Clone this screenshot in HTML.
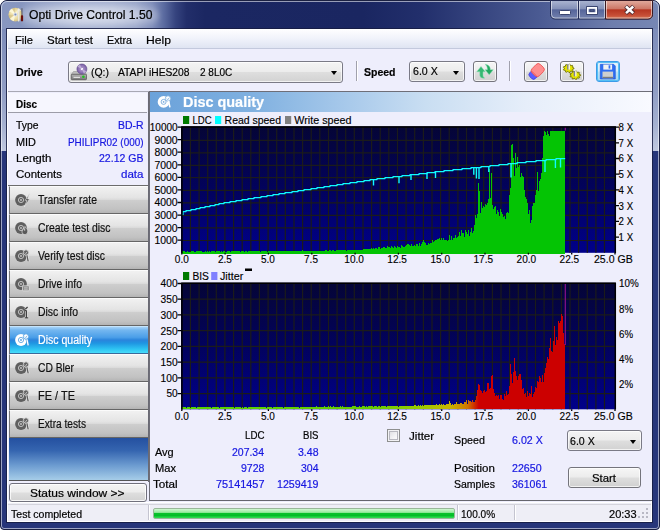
<!DOCTYPE html>
<html lang="en">
<head>
<meta charset="utf-8">
<title>Opti Drive Control 1.50</title>
<style>
html,body{margin:0;padding:0}
body{width:660px;height:530px;background:#fff;overflow:hidden;position:relative;font-family:"Liberation Sans",Arial,sans-serif;font-size:12px;color:#000}
div,span,svg{position:absolute;box-sizing:border-box}
.t{white-space:nowrap;transform-origin:0 50%;display:block;-webkit-text-stroke:.2px currentColor}
#frame{left:0;top:0;width:660px;height:530px;border-radius:7px 7px 4px 4px;background:#27367a;overflow:hidden;border:1px solid #1b2142}
#sideg{left:0;top:0;width:658px;height:150px;background:linear-gradient(to bottom,#7080b0 0,#7e8dba 20%,#909dc4 60%,#a4b0d0 82%,#c0c8df 100%)}
#titleg{left:0;top:0;width:658px;height:28px;background:linear-gradient(to right,#8897c0 0,#8796bf 3%,#97a4c9 6%,#a9b4d3 12%,#a7b2d2 17%,#9aa6ca 20.5%,#7f8dba 23%,#5a6a9f 24.800%,#36447f 26.500%,#222e6a 28.200%,#1b2762 31%,#1a2661 55%,#222f6c 64%,#4b5b93 82%,#6e7ead 93%,#7787b4 100%)}
#titleglow{left:20px;top:4px;width:138px;height:21px;border-radius:10px;background:radial-gradient(ellipse at center,rgba(255,255,255,.55) 0,rgba(255,255,255,.4) 50%,rgba(255,255,255,0) 100%);filter:blur(2.5px)}
#hl{left:0;top:0;width:658px;height:528px;border-radius:6px 6px 3px 3px;border:1px solid rgba(255,255,255,.55)}
#client{left:7px;top:29px;width:645px;height:493px;background:#eeeefc;border:1px solid #fff;outline:1px solid rgba(22,28,66,.85)}
#menubar{left:8px;top:30px;width:643px;height:19px;background:linear-gradient(to bottom,#fdfdff 0,#f1f3fb 45%,#dfe4f2 100%);border-bottom:1px solid #c3c9dd}
#tbline{left:8px;top:91px;width:643px;height:2px;border-top:1px solid #a8a8b4;border-bottom:1px solid #fff}
.combo{border:1px solid #7a7a86;border-radius:3px;background:linear-gradient(to bottom,#f4f4f4 0,#ececec 48%,#dedede 52%,#d2d2d2 100%);box-shadow:inset 0 0 0 1px rgba(255,255,255,.7)}
.arrow{width:0;height:0;border-left:3.5px solid transparent;border-right:3.5px solid transparent;border-top:4px solid #000}
.vsep{width:2px;border-left:1px solid #a0a0ac;border-right:1px solid #fff}
.tbtn{border:1px solid #74747c;border-radius:3px;background:linear-gradient(to bottom,#f6f6f6 0,#ececec 48%,#dedede 52%,#d0d0d0 100%);box-shadow:inset 0 0 0 1px rgba(255,255,255,.7)}
/* sidebar */
#side{left:8px;top:92px;width:141px;height:390px;background:#eeeefc;border-right:1px solid #6a6a74}
#dischdr{left:8px;top:93px;width:139px;height:20px;background:#f6f6fe;border-bottom:1px solid #9c9ca8}
#sidehl{left:147px;top:92px;width:1px;height:390px;background:#fff}
.sb{left:9px;width:139px;height:28px;border-top:1px solid #fbfbfb;border-bottom:1px solid #666;border-left:1px solid #777;background:linear-gradient(to bottom,#f1f1f1 0,#e4e4e4 40%,#d9d9d9 50%,#cdcdcd 52%,#c2c2c2 85%,#b4b4b4 100%)}
.sb.sel{background:linear-gradient(to bottom,#a5d2f8 0,#74b7f0 12%,#4a9ee8 40%,#2b84dc 50%,#1f95e2 62%,#2ec4f2 85%,#48dcfa 100%);border-top-color:#c4e4fc;border-bottom-color:#3a6a9a}
.sb .ic{left:4px;top:5px}
#sblue{left:9px;top:438px;width:139px;height:43px;background:linear-gradient(to bottom,#2450a0 0,#3565b0 30%,#6c9bd0 65%,#a6cde8 100%);border-bottom:1px solid #555}
#statbtn{left:9px;top:483px;width:138px;height:19px;border:1px solid #70707c;border-radius:3px;background:linear-gradient(to bottom,#f4f4f4 0,#ececec 48%,#dedede 52%,#d2d2d2 100%);box-shadow:inset 0 0 0 1px rgba(255,255,255,.8)}
/* main panel */
#main{left:149px;top:91px;width:503px;height:410px;border-left:1px solid #6e6e78;border-top:1px solid #6e6e78;border-bottom:1px solid #66666e;background:#eeeefc}
#mainhl{left:150px;top:92px;width:501px;height:1px;background:#fff}
#hdr{left:150px;top:92px;width:501px;height:20px;background:linear-gradient(to right,#6ba2da 0,#7fb0e0 20%,#a9caeb 40%,#c9def2 55%,#e6eefa 75%,#f9faff 100%)}
#charts{left:149px;top:113px}
#chk{left:387px;top:429px;width:13px;height:13px;border:1px solid #8e8f8f;background:linear-gradient(135deg,#d8d8dc 0,#f4f4f6 60%,#fff 100%);box-shadow:inset 0 0 0 1px #f2f2f4, inset 0 0 0 2px #b8b8c0}
/* status bar */
#status{left:8px;top:502px;width:643px;height:19px;background:#eeeef6;border-top:1px solid #fff}
#status:before{content:"";position:absolute;left:0;top:1px;width:643px;height:1px;background:#d4d4dc}
#status .sep{top:2px;width:2px;height:15px;border-left:1px solid #c4c4d0;border-right:1px solid #fff}
#prog{left:153px;top:508px;width:302px;height:11px;border-radius:2px;background:linear-gradient(to bottom,#d2f8d2 0,#96ea9e 38%,#08c22c 50%,#04bc28 72%,#30e054 100%);border:1px solid #9ab89a}
#grip{left:638px;top:508px;width:12px;height:12px}
</style>
</head>
<body>
<div id="frame">
  <div id="sideg"></div>
  <div id="titleg"></div>
  <div id="titleglow"></div>
  <div id="hl"></div>
</div>
<svg style="left:7px;top:6px" width="18" height="18" viewBox="7 6 18 18">
<defs><radialGradient id="cdg" cx="0.45" cy="0.45" r="0.6"><stop offset="0" stop-color="#fff8d4"/><stop offset="0.6" stop-color="#ecdca2"/><stop offset="1" stop-color="#cdb878"/></radialGradient></defs>
<circle cx="15.4" cy="14.6" r="6.9" fill="url(#cdg)"/>
<path d="M15.4,14.6L9,11.5A6.9,6.9 0 0 1 12,8.6Z M15.4,14.6L13.8,21.3A6.9,6.9 0 0 1 10,18.8Z M15.4,14.6L18,8.2A6.9,6.9 0 0 1 21,10.6Z" fill="#fffbe2" opacity=".8"/>
<path d="M15.4,14.6L8.5,14.8A6.9,6.9 0 0 0 9.6,18.3Z M15.4,14.6L15.2,7.7A6.9,6.9 0 0 0 12.2,8.5Z" fill="#c9b57a" opacity=".55"/>
<circle cx="15.4" cy="14.6" r="2" fill="#dfe3ee"/><circle cx="15.4" cy="14.6" r="1" fill="#7d8db4"/>
<path d="M17.6,9.2c.8-.6 1.700-.600 2.300,0l-.5,2.300v9.300c0,.8-1.400,.8-1.400,0v-9.300z" fill="#f4f2ec" stroke="#cfcabb" stroke-width=".4"/>
<rect x="21.4" y="8.2" width="1.100" height="7.4" fill="#5e5e66"/>
<rect x="20.9" y="15.300" width="2.2" height="6" rx=".6" fill="#6a0f0c"/>
</svg>
<svg style="left:549px;top:0" width="105" height="22" viewBox="549 0 105 22">
<defs>
<linearGradient id="cb1" x1="0" y1="0" x2="0" y2="1"><stop offset="0" stop-color="#abb5d1"/><stop offset=".46" stop-color="#8390b7"/><stop offset=".5" stop-color="#56659a"/><stop offset="1" stop-color="#7381ad"/></linearGradient>
<linearGradient id="cb2" x1="0" y1="0" x2="0" y2="1"><stop offset="0" stop-color="#e2ab9e"/><stop offset=".46" stop-color="#cc7665"/><stop offset=".5" stop-color="#b63521"/><stop offset=".8" stop-color="#c64e36"/><stop offset="1" stop-color="#d67a58"/></linearGradient>
</defs>
<path d="M550.5,0.500H652.5V14.500a4.500,4.500 0 0 1 -4.500,4.500H555a4.500,4.500 0 0 1 -4.500,-4.500Z" fill="url(#cb1)" stroke="#232c55" stroke-width="1"/>
<path d="M605.5,0.500H652.5V14.500a4.500,4.500 0 0 1 -4.500,4.500H605.500Z" fill="url(#cb2)" stroke="#3a1a22" stroke-width="1"/>
<path d="M551.5,1V14.500a3.500,3.500 0 0 0 3.500,3.500H577.5V1M579.5,1V18H604.500V1M606.500,1V18H648a3.500,3.500 0 0 0 3.500,-3.500V1" fill="none" stroke="rgba(255,255,255,.55)" stroke-width="1"/>
<path d="M578.5,0.500V19" stroke="#232c55" stroke-width="1"/>
<rect x="559.5" y="10.500" width="11" height="4" rx=".8" fill="#fff" stroke="#3a4570" stroke-width="1"/>
<path d="M586.5,6.500h11v8h-11z" fill="none" stroke="#3a4570" stroke-width="1"/><path d="M590,9.800h4v1.600h-4z" fill="none" stroke="#3a4570" stroke-width="1"/>
<path d="M587.8,7.800h8.400v5.400h-8.400z" fill="none" stroke="#fff" stroke-width="1.700"/>
<path d="M625.600,6.200l8,7.200M633.600,6.200l-8,7.200" fill="none" stroke="#4c2a30" stroke-width="4.200"/>
<path d="M626,6.500l7.200,6.600M633.200,6.500l-7.200,6.600" fill="none" stroke="#fff" stroke-width="2.500"/>
</svg>
<div id="client"></div>
<div id="menubar"></div>
<div id="tbline"></div>
<!-- toolbar -->
<div class="combo" style="left:68px;top:61px;width:275px;height:22px"></div>
<div class="arrow" style="left:331px;top:71px"></div>
<svg style="left:70px;top:63px" width="18" height="18" viewBox="70 63 18 18">
<defs><radialGradient id="pdg" cx=".5" cy=".5" r=".5"><stop offset="0" stop-color="#fff"/><stop offset=".22" stop-color="#f4eefa"/><stop offset=".3" stop-color="#a58fc4"/><stop offset="1" stop-color="#7a5da6"/></radialGradient>
<linearGradient id="dbx" x1="0" y1="0" x2="0" y2="1"><stop offset="0" stop-color="#b4b4b4"/><stop offset="1" stop-color="#787878"/></linearGradient></defs>
<path d="M73.500,71.500h11l2,2.900h-15.200z" fill="#bdbdbd" stroke="#8a8a8a" stroke-width=".5"/>
<rect x="71.300" y="74.300" width="15.200" height="5.400" rx=".8" fill="url(#dbx)" stroke="#505050" stroke-width=".7"/>
<rect x="73.500" y="76.800" width="6.500" height="1.100" fill="#e6e6e6"/>
<circle cx="83.400" cy="76.800" r="1.300" fill="#20c020"/>
<circle cx="81.900" cy="69" r="5" fill="url(#pdg)" stroke="#5e4a88" stroke-width=".6"/>
<path d="M81.900,69L77.500,66.700A5,5 0 0 1 80,64.400Z M81.900,69L86.300,71.300A5,5 0 0 1 83.800,73.600Z" fill="#cdbfe2" opacity=".75"/>
</svg>
<div class="vsep" style="left:356px;top:61px;height:20px"></div>
<div class="combo" style="left:409px;top:61px;width:56px;height:21px"></div>
<div class="arrow" style="left:453px;top:70.500px"></div>
<div class="tbtn" style="left:473px;top:61px;width:24px;height:21px"></div>
<div class="vsep" style="left:509px;top:61px;height:20px"></div>
<div class="tbtn" style="left:524px;top:61px;width:24px;height:21px"></div>
<div class="tbtn" style="left:560px;top:61px;width:24px;height:21px"></div>
<div class="tbtn" style="left:596px;top:61px;width:24px;height:21px;border-color:#3c9be8;background:linear-gradient(to bottom,#e8f5fd 0,#d6edfb 48%,#bde3f8 52%,#a8d8f4 100%);box-shadow:inset 0 0 0 1px #56c0f4"></div>
<svg style="left:474px;top:62px" width="22" height="19" viewBox="474 62 22 19">
<path d="M481,66.400L485.300,71.800H483v3.600c0,1.200 .8,2.200 2,2.600c-2.800,.6-5.200-.4-5.200-2.800v-3.400H476.700Z" fill="#35b872" stroke="#8fe0b6" stroke-width=".5"/>
<path d="M489.200,74.800L485,69.700H487.400c0-2.400-.6-4-2.400-5.400c3,.2 5.400,2 5.400,5.400H493.300Z" fill="#22a860" stroke="#8fe0b6" stroke-width=".5"/>
</svg>
<svg style="left:525px;top:62px" width="22" height="19" viewBox="525 62 22 19">
<g transform="rotate(-46 536.300 71.800)">
<rect x="528.300" y="67.800" width="8" height="8" rx="2.600" fill="#5c5cff" stroke="#3c3ce4" stroke-width=".8"/>
<rect x="532.600" y="66.600" width="11.800" height="10.200" rx="3" fill="#ff8e8e" stroke="#ec4c4c" stroke-width=".8"/>
<path d="M533.600,68.500v6.400" stroke="#ec4c4c" stroke-width=".6" fill="none"/>
</g></svg>
<svg style="left:561px;top:62px" width="22" height="19" viewBox="561 62 22 19"><path d="M573.97,67.98L573.97,68.82L572.68,69.21L572.39,69.83L573.06,70.77L572.37,71.42L571.06,71.07L570.33,71.39L570.06,72.45L569.00,72.60L568.29,71.68L567.46,71.56L566.38,72.24L565.45,71.82L565.66,70.75L565.12,70.25L563.74,70.23L563.37,69.44L564.41,68.73L564.41,68.07L563.37,67.36L563.74,66.57L565.12,66.55L565.66,66.05L565.45,64.98L566.38,64.56L567.46,65.24L568.29,65.12L569.00,64.20L570.06,64.35L570.33,65.41L571.06,65.73L572.37,65.38L573.06,66.03L572.39,66.97L572.68,67.59Z" fill="#e4e400" stroke="#6e6e00" stroke-width=".9" stroke-linejoin="round"/><rect x="567.1" y="64.2" width="1.500" height="5.400" fill="#80809a"/><rect x="568.6" y="64.2" width="1.300" height="5.400" fill="#f4f4f4"/><path d="M580.57,74.78L580.57,75.62L579.28,76.01L578.99,76.63L579.66,77.57L578.97,78.22L577.66,77.87L576.93,78.19L576.66,79.25L575.60,79.40L574.89,78.48L574.06,78.36L572.98,79.04L572.05,78.62L572.26,77.55L571.72,77.05L570.34,77.03L569.97,76.24L571.01,75.53L571.01,74.87L569.97,74.16L570.34,73.37L571.72,73.35L572.26,72.85L572.05,71.78L572.98,71.36L574.06,72.04L574.89,71.92L575.60,71.00L576.66,71.15L576.93,72.21L577.66,72.53L578.97,72.18L579.66,72.83L578.99,73.77L579.28,74.39Z" fill="#e4e400" stroke="#6e6e00" stroke-width=".9" stroke-linejoin="round"/><rect x="573.7" y="71.0" width="1.500" height="5.400" fill="#80809a"/><rect x="575.2" y="71.0" width="1.300" height="5.400" fill="#f4f4f4"/></svg>
<svg style="left:597px;top:62px" width="22" height="19" viewBox="597 62 22 19">
<path d="M600.300,64.300H613.600L615.300,66V79H600.300Z" fill="#2f6ef2" stroke="#1c50d0" stroke-width=".6"/>
<rect x="603.300" y="64.600" width="8.800" height="5" fill="#f2f2f2"/>
<rect x="608.600" y="65.300" width="1.700" height="3.300" fill="#2f6ef2"/>
<rect x="602.500" y="71.600" width="10.600" height="6.600" fill="#cfcfcf"/>
<rect x="602.500" y="76.800" width="10.600" height="1.400" fill="#7c7c7c"/>
</svg>
<!-- sidebar -->
<div id="side"></div>
<div id="dischdr"></div>
<div style="left:8px;top:185px;width:140px;height:1px;background:#6c6c6c"></div>
<div class="sb" style="top:186px"><svg class="ic" width="19" height="16" viewBox="0 0 19 16"><circle cx="7" cy="8" r="5.900" fill="#5f5f5f"/><circle cx="7" cy="8" r="2.600" fill="none" stroke="#d8d8d8" stroke-width=".8"/><circle cx="7" cy="8" r="1" fill="#cfcfcf"/><circle cx="7" cy="8" r=".45" fill="#5f5f5f"/><path d="M15.600,1.400L11.300,8.300h1.900L10.300,15l5.200-7.900h-2z" fill="#2c2c2c" stroke="#e6e6e6" stroke-width=".7"/></svg></div>
<div class="sb" style="top:214px"><svg class="ic" width="19" height="16" viewBox="0 0 19 16"><circle cx="7" cy="8" r="5.900" fill="#5f5f5f"/><circle cx="7" cy="8" r="2.600" fill="none" stroke="#d8d8d8" stroke-width=".8"/><circle cx="7" cy="8" r="1" fill="#cfcfcf"/><circle cx="7" cy="8" r=".45" fill="#5f5f5f"/><path d="M10.800,6.500c1.800,1.500 3.300,3 3,5.400c-.3,1.900-1.900,2.800-3.400,2.600c-1.900-.3-2.700-1.900-2.300-3.400c.4-1.100 1.100-1.400 1.200-2.800c.9,.9 1.100,1.400 1.400,2.200z" fill="#5a5a5a" stroke="#e2e2e2" stroke-width=".7"/></svg></div>
<div class="sb" style="top:242px"><svg class="ic" width="19" height="16" viewBox="0 0 19 16"><circle cx="7" cy="8" r="5.900" fill="#5f5f5f"/><circle cx="7" cy="8" r="2.600" fill="none" stroke="#d8d8d8" stroke-width=".8"/><circle cx="7" cy="8" r="1" fill="#cfcfcf"/><circle cx="7" cy="8" r=".45" fill="#5f5f5f"/><path d="M12.800,6.800l1.500,6.800" stroke="#e6e6e6" stroke-width="2.600"/><path d="M12.800,6.800l1.400,6.600" stroke="#5f5f5f" stroke-width="1.300"/><circle cx="12" cy="4.500" r="2.700" fill="#5f5f5f" stroke="#e6e6e6" stroke-width=".8"/><path d="M10.800,4.600l1,1l1.400,-1.900" stroke="#e6e6e6" stroke-width=".7" fill="none"/></svg></div>
<div class="sb" style="top:270px"><svg class="ic" width="19" height="16" viewBox="0 0 19 16"><circle cx="7" cy="8" r="5.900" fill="#5f5f5f"/><circle cx="7" cy="8" r="2.600" fill="none" stroke="#d8d8d8" stroke-width=".8"/><circle cx="7" cy="8" r="1" fill="#cfcfcf"/><circle cx="7" cy="8" r=".45" fill="#5f5f5f"/><rect x="8.500" y="9.800" width="6.800" height="5" rx=".8" fill="#8c8c8c" stroke="#e8e8e8" stroke-width=".7"/><path d="M10,11.800h3.800M10,13.200h3.800" stroke="#e0e0e0" stroke-width=".6"/></svg></div>
<div class="sb" style="top:298px"><svg class="ic" width="19" height="16" viewBox="0 0 19 16"><circle cx="7" cy="8" r="5.900" fill="#5f5f5f"/><circle cx="7" cy="8" r="2.600" fill="none" stroke="#d8d8d8" stroke-width=".8"/><circle cx="7" cy="8" r="1" fill="#cfcfcf"/><circle cx="7" cy="8" r=".45" fill="#5f5f5f"/><path d="M13.600,3l-2.400,2.300M12.400,6.500v7.200M10.800,13.900h3.400M11,6.700h1.400" stroke="#e8e8e8" stroke-width="2.400" fill="none"/><path d="M13.600,3l-2.400,2.300M12.400,6.500v7.200M10.800,13.900h3.400M11,6.700h1.400" stroke="#444" stroke-width="1.300" fill="none"/></svg></div>
<div class="sb sel" style="top:326px"><svg class="ic" width="19" height="16" viewBox="0 0 19 16"><circle cx="7" cy="8" r="5.900" fill="#ffffff"/><circle cx="7" cy="8" r="2.600" fill="none" stroke="#4a9be0" stroke-width=".8"/><circle cx="7" cy="8" r="1" fill="#4a9be0"/><circle cx="7" cy="8" r=".45" fill="#ffffff"/><path d="M12.800,6.800l1.500,6.800" stroke="#4a9be0" stroke-width="2.600"/><path d="M12.800,6.800l1.400,6.600" stroke="#ffffff" stroke-width="1.300"/><circle cx="12" cy="4.500" r="2.700" fill="#ffffff" stroke="#4a9be0" stroke-width=".8"/><path d="M10.800,4.600l1,1l1.400,-1.900" stroke="#4a9be0" stroke-width=".7" fill="none"/></svg></div>
<div class="sb" style="top:354px"><svg class="ic" width="19" height="16" viewBox="0 0 19 16"><circle cx="7" cy="8" r="5.900" fill="#5f5f5f"/><circle cx="7" cy="8" r="2.600" fill="none" stroke="#d8d8d8" stroke-width=".8"/><circle cx="7" cy="8" r="1" fill="#cfcfcf"/><circle cx="7" cy="8" r=".45" fill="#5f5f5f"/><path d="M12.800,6.800l1.500,6.800" stroke="#e6e6e6" stroke-width="2.600"/><path d="M12.800,6.800l1.400,6.600" stroke="#5f5f5f" stroke-width="1.300"/><circle cx="12" cy="4.500" r="2.700" fill="#5f5f5f" stroke="#e6e6e6" stroke-width=".8"/><path d="M10.800,4.600l1,1l1.400,-1.900" stroke="#e6e6e6" stroke-width=".7" fill="none"/></svg></div>
<div class="sb" style="top:382px"><svg class="ic" width="19" height="16" viewBox="0 0 19 16"><circle cx="7" cy="8" r="5.900" fill="#5f5f5f"/><circle cx="7" cy="8" r="2.600" fill="none" stroke="#d8d8d8" stroke-width=".8"/><circle cx="7" cy="8" r="1" fill="#cfcfcf"/><circle cx="7" cy="8" r=".45" fill="#5f5f5f"/><path d="M12.800,6.800l1.500,6.800" stroke="#e6e6e6" stroke-width="2.600"/><path d="M12.800,6.800l1.400,6.600" stroke="#5f5f5f" stroke-width="1.300"/><circle cx="12" cy="4.500" r="2.700" fill="#5f5f5f" stroke="#e6e6e6" stroke-width=".8"/><path d="M10.800,4.600l1,1l1.400,-1.900" stroke="#e6e6e6" stroke-width=".7" fill="none"/></svg></div>
<div class="sb" style="top:410px"><svg class="ic" width="19" height="16" viewBox="0 0 19 16"><circle cx="7" cy="8" r="5.900" fill="#5f5f5f"/><circle cx="7" cy="8" r="2.600" fill="none" stroke="#d8d8d8" stroke-width=".8"/><circle cx="7" cy="8" r="1" fill="#cfcfcf"/><circle cx="7" cy="8" r=".45" fill="#5f5f5f"/><path d="M12.800,6.800l1.500,6.800" stroke="#e6e6e6" stroke-width="2.600"/><path d="M12.800,6.800l1.400,6.600" stroke="#5f5f5f" stroke-width="1.300"/><circle cx="12" cy="4.500" r="2.700" fill="#5f5f5f" stroke="#e6e6e6" stroke-width=".8"/><path d="M10.800,4.600l1,1l1.400,-1.900" stroke="#e6e6e6" stroke-width=".7" fill="none"/></svg></div>
<div id="sblue"></div>
<div id="statbtn"></div>
<!-- main -->
<div id="main"></div>
<div id="hdr"></div>
<svg style="left:156px;top:94px" width="18" height="17" viewBox="156 94 18 17">
<circle cx="163.600" cy="101.900" r="5.900" fill="#fff"/>
<circle cx="163.600" cy="101.900" r="2.500" fill="none" stroke="#79acdd" stroke-width=".9"/>
<circle cx="163.600" cy="101.900" r=".9" fill="#79acdd"/>
<circle cx="168" cy="98.500" r="2.700" fill="#fff" stroke="#79acdd" stroke-width=".8"/>
<path d="M166.800,98.600l1,1.100l1.500,-2" stroke="#79acdd" stroke-width=".8" fill="none"/>
<path d="M168.600,101l1.300,6.300" stroke="#fff" stroke-width="1.600"/>
</svg>
<svg id="charts" width="503" height="310" viewBox="149 113 503 310">
<defs><linearGradient id="pg" x1="0" y1="0" x2="0" y2="1"><stop offset="0" stop-color="#050536"/><stop offset="0.5" stop-color="#02025d"/><stop offset="1" stop-color="#00008a"/></linearGradient>
<linearGradient id="bg" gradientUnits="userSpaceOnUse" x1="182" y1="0" x2="565" y2="0"><stop offset="0" stop-color="#55d200"/><stop offset="0.5" stop-color="#66cc00"/><stop offset="0.62" stop-color="#98cc00"/><stop offset="0.70" stop-color="#c8b400"/><stop offset="0.745" stop-color="#d07800"/><stop offset="0.775" stop-color="#cc0000"/><stop offset="1" stop-color="#cc0000"/></linearGradient></defs>
<rect x="181.0" y="126.3" width="434.6" height="126.5" fill="url(#pg)"/>
<rect x="181.0" y="282.7" width="434.6" height="126.6" fill="url(#pg)"/>
<path d="M190.4,127.1V252.8M190.4,283.5V409.3M199.1,127.1V252.8M199.1,283.5V409.3M207.7,127.1V252.8M207.7,283.5V409.3M216.3,127.1V252.8M216.3,283.5V409.3M224.9,127.1V252.8M224.9,283.5V409.3M233.6,127.1V252.8M233.6,283.5V409.3M242.2,127.1V252.8M242.2,283.5V409.3M250.8,127.1V252.8M250.8,283.5V409.3M259.4,127.1V252.8M259.4,283.5V409.3M268.1,127.1V252.8M268.1,283.5V409.3M276.7,127.1V252.8M276.7,283.5V409.3M285.3,127.1V252.8M285.3,283.5V409.3M294.0,127.1V252.8M294.0,283.5V409.3M302.6,127.1V252.8M302.6,283.5V409.3M311.2,127.1V252.8M311.2,283.5V409.3M319.8,127.1V252.8M319.8,283.5V409.3M328.5,127.1V252.8M328.5,283.5V409.3M337.1,127.1V252.8M337.1,283.5V409.3M345.7,127.1V252.8M345.7,283.5V409.3M354.3,127.1V252.8M354.3,283.5V409.3M363.0,127.1V252.8M363.0,283.5V409.3M371.6,127.1V252.8M371.6,283.5V409.3M380.2,127.1V252.8M380.2,283.5V409.3M388.8,127.1V252.8M388.8,283.5V409.3M397.5,127.1V252.8M397.5,283.5V409.3M406.1,127.1V252.8M406.1,283.5V409.3M414.7,127.1V252.8M414.7,283.5V409.3M423.4,127.1V252.8M423.4,283.5V409.3M432.0,127.1V252.8M432.0,283.5V409.3M440.6,127.1V252.8M440.6,283.5V409.3M449.2,127.1V252.8M449.2,283.5V409.3M457.9,127.1V252.8M457.9,283.5V409.3M466.5,127.1V252.8M466.5,283.5V409.3M475.1,127.1V252.8M475.1,283.5V409.3M483.7,127.1V252.8M483.7,283.5V409.3M492.4,127.1V252.8M492.4,283.5V409.3M501.0,127.1V252.8M501.0,283.5V409.3M509.6,127.1V252.8M509.6,283.5V409.3M518.3,127.1V252.8M518.3,283.5V409.3M526.9,127.1V252.8M526.9,283.5V409.3M535.5,127.1V252.8M535.5,283.5V409.3M544.1,127.1V252.8M544.1,283.5V409.3M552.8,127.1V252.8M552.8,283.5V409.3M561.4,127.1V252.8M561.4,283.5V409.3M570.0,127.1V252.8M570.0,283.5V409.3M578.6,127.1V252.8M578.6,283.5V409.3M587.3,127.1V252.8M587.3,283.5V409.3M595.9,127.1V252.8M595.9,283.5V409.3M604.5,127.1V252.8M604.5,283.5V409.3M181.8,240.5H615.0M181.8,227.8H615.0M181.8,215.3H615.0M181.8,202.8H615.0M181.8,190.4H615.0M181.8,177.7H615.0M181.8,165.4H615.0M181.8,152.8H615.0M181.8,140.3H615.0M181.8,393.6H615.0M181.8,377.9H615.0M181.8,362.1H615.0M181.8,346.4H615.0M181.8,330.7H615.0M181.8,314.9H615.0M181.8,299.2H615.0" stroke="#1b1b1b" stroke-width="1.2" fill="none"/>
<path d="M182.0,253.5V251.1h1V251.4h1V251.3h1V251.9h1V251.9h1V251.3h1V251.9h1V251.7h1V251.5h1V251.3h1V251.4h1V250.9h1V251.6h1V251.8h1V251.0h1V251.0h1V250.9h1V251.4h1V251.0h1V250.8h1V251.5h1V251.6h1V251.6h1V251.1h1V251.6h1V251.0h1V251.6h1V251.1h1V251.5h1V251.4h1V251.2h1V251.4h1V251.3h1V251.6h1V250.9h1V251.0h1V250.8h1V251.3h1V251.5h1V250.9h1V251.5h1V251.1h1V251.4h1V251.7h1V251.6h1V251.1h1V250.8h1V251.0h1V251.6h1V251.0h1V251.2h1V250.7h1V250.9h1V251.0h1V251.3h1V250.8h1V250.8h1V251.3h1V251.6h1V250.8h1V250.9h1V250.8h1V251.6h1V251.4h1V251.0h1V251.6h1V251.4h1V250.9h1V251.3h1V251.2h1V250.7h1V251.3h1V250.7h1V250.6h1V251.1h1V251.2h1V251.3h1V251.1h1V251.5h1V251.2h1V251.1h1V251.3h1V251.1h1V250.7h1V251.3h1V251.5h1V251.3h1V250.8h1V250.8h1V250.6h1V250.8h1V250.9h1V250.9h1V250.6h1V251.3h1V250.9h1V250.6h1V250.9h1V250.6h1V251.4h1V250.7h1V251.4h1V251.1h1V251.3h1V250.6h1V251.0h1V250.9h1V250.8h1V250.9h1V250.6h1V250.6h1V250.9h1V250.9h1V250.9h1V250.9h1V251.3h1V250.5h1V250.9h1V250.6h1V251.1h1V250.4h1V251.3h1V250.7h1V250.7h1V251.2h1V251.1h1V250.9h1V251.1h1V250.6h1V250.7h1V250.5h1V250.9h1V251.0h1V251.1h1V250.9h1V250.8h1V250.8h1V250.5h1V251.0h1V250.6h1V251.1h1V250.6h1V250.9h1V250.1h1V250.1h1V250.7h1V250.6h1V250.2h1V250.3h1V250.8h1V250.2h1V250.4h1V250.5h1V250.7h1V250.2h1V250.0h1V250.2h1V250.2h1V250.4h1V250.2h1V249.9h1V250.1h1V250.3h1V250.0h1V250.6h1V250.3h1V250.2h1V249.6h1V249.5h1V249.8h1V249.6h1V250.2h1V249.8h1V249.8h1V249.8h1V249.6h1V249.8h1V250.0h1V249.6h1V249.9h1V249.8h1V249.3h1V249.2h1V249.2h1V249.0h1V249.1h1V249.3h1V248.9h1V248.9h1V248.2h1V248.9h1V248.3h1V248.7h1V248.4h1V248.1h1V249.0h1V247.2h1V247.1h1V248.6h1V247.7h1V247.6h1V247.4h1V247.4h1V247.7h1V248.0h1V246.3h1V246.6h1V246.7h1V247.5h1V246.4h1V246.7h1V247.5h1V246.3h1V247.1h1V247.9h1V245.8h1V246.7h1V247.1h1V247.7h1V244.7h1V245.6h1V246.8h1V246.5h1V246.4h1V245.2h1V244.4h1V244.3h1V244.5h1V246.1h1V243.8h1V246.1h1V245.6h1V245.4h1V246.0h1V243.7h1V243.5h1V245.8h1V243.1h1V246.2h1V244.1h1V242.3h1V239.9h1V242.2h1V242.7h1V245.3h1V244.9h1V242.6h1V244.3h1V242.9h1V243.2h1V240.3h1V242.2h1V240.8h1V239.6h1V239.7h1V239.3h1V239.1h1V238.1h1V240.2h1V238.2h1V240.1h1V237.8h1V239.7h1V240.4h1V239.6h1V240.8h1V240.1h1V235.3h1V239.9h1V235.9h1V239.6h1V238.3h1V237.6h1V234.6h1V237.5h1V237.3h1V235.9h1V231.5h1V235.8h1V230.0h1V232.8h1V233.1h1V236.6h1V229.7h1V231.9h1V233.9h1V230.1h1V235.9h1V232.2h1V228.3h1V233.2h1V230.9h1V224.6h1V215.1h1V218.1h1V214.2h1V183.2h1V190.8h1V212.9h1V201.9h1V207.8h1V205.9h1V206.6h1V204.0h1V205.3h1V203.3h1V199.3h1V168.5h1V197.5h1V172.8h1V204.8h1V208.6h1V207.2h1V206.0h1V214.0h1V210.4h1V212.1h1V216.2h1V209.4h1V211.5h1V214.0h1V216.8h1V216.0h1V219.4h1V213.3h1V211.6h1V212.7h1V194.6h1V187.5h1V145.2h1V143.9h1V158.0h1V176.3h1V152.7h1V168.4h1V156.7h1V166.6h1V164.9h1V176.5h1V172.5h1V175.5h1V176.6h1V189.8h1V196.7h1V198.9h1V202.8h1V213.7h1V209.9h1V223.3h1V220.1h1V205.8h1V202.7h1V203.4h1V195.2h1V189.5h1V172.2h1V191.4h1V181.2h1V178.7h1V172.8h1V158.4h1V135.7h1V130.6h1V132.1h1V135.2h1V130.6h1V133.8h1V135.5h1V130.6h1V130.6h1V130.6h1V130.6h1V130.6h1V130.6h1V130.6h1V130.6h1V130.6h1V130.6h1V130.6h1V130.6h1V130.6h1V130.6h1V130.6h1V253.5Z" fill="#04c404" shape-rendering="crispEdges"/>
<path d="M182.0,409.0V406.6h1V407.2h1V406.7h1V407.2h1V407.5h1V406.9h1V407.3h1V407.1h1V407.5h1V407.4h1V407.4h1V406.6h1V407.2h1V406.8h1V407.5h1V407.0h1V407.3h1V406.8h1V407.0h1V407.3h1V406.6h1V407.3h1V407.4h1V407.1h1V406.6h1V407.4h1V406.9h1V406.7h1V406.9h1V407.5h1V406.9h1V407.3h1V407.2h1V407.0h1V406.6h1V406.9h1V407.1h1V407.5h1V407.3h1V406.8h1V407.0h1V406.6h1V406.8h1V407.1h1V406.9h1V406.8h1V406.7h1V406.6h1V407.4h1V407.1h1V406.8h1V407.3h1V407.5h1V407.0h1V407.4h1V407.1h1V406.8h1V407.0h1V407.3h1V407.5h1V407.0h1V407.5h1V407.3h1V406.7h1V407.2h1V407.5h1V406.6h1V406.8h1V406.7h1V407.2h1V406.5h1V407.3h1V407.3h1V407.2h1V406.9h1V406.9h1V406.8h1V406.6h1V406.7h1V407.3h1V407.0h1V407.3h1V407.1h1V406.7h1V407.5h1V407.3h1V407.3h1V406.8h1V407.4h1V406.8h1V407.5h1V407.4h1V406.8h1V407.3h1V406.9h1V407.1h1V406.8h1V406.9h1V407.2h1V407.1h1V407.2h1V407.5h1V406.9h1V407.2h1V407.3h1V406.6h1V406.9h1V407.1h1V407.2h1V407.3h1V407.3h1V407.4h1V407.4h1V407.0h1V407.1h1V407.4h1V407.0h1V407.5h1V406.9h1V407.3h1V406.5h1V406.5h1V406.8h1V407.2h1V407.1h1V406.9h1V406.5h1V407.2h1V407.4h1V407.2h1V406.8h1V406.6h1V407.0h1V406.6h1V406.4h1V406.7h1V407.0h1V406.8h1V407.0h1V407.2h1V406.6h1V406.5h1V406.4h1V406.8h1V406.6h1V406.9h1V406.4h1V406.8h1V406.4h1V406.8h1V407.0h1V406.3h1V406.5h1V406.8h1V407.1h1V406.9h1V407.0h1V406.7h1V406.3h1V406.7h1V406.1h1V406.6h1V406.9h1V406.8h1V406.8h1V406.9h1V406.8h1V406.8h1V406.7h1V406.6h1V406.2h1V406.2h1V406.4h1V406.1h1V406.6h1V406.8h1V406.9h1V406.2h1V406.9h1V406.9h1V406.1h1V406.1h1V405.9h1V406.5h1V406.0h1V406.7h1V406.2h1V406.2h1V406.0h1V406.1h1V406.3h1V406.7h1V406.4h1V406.4h1V405.9h1V406.5h1V406.4h1V406.4h1V406.5h1V406.4h1V405.8h1V406.4h1V406.1h1V406.1h1V406.6h1V406.3h1V406.3h1V406.1h1V406.2h1V405.7h1V405.7h1V405.9h1V405.8h1V406.2h1V406.0h1V405.8h1V406.6h1V406.4h1V406.1h1V406.3h1V405.7h1V405.7h1V405.9h1V406.3h1V406.0h1V406.2h1V405.5h1V406.2h1V405.6h1V406.0h1V406.2h1V405.5h1V405.4h1V405.4h1V405.9h1V405.6h1V405.3h1V405.6h1V405.3h1V405.5h1V404.9h1V405.6h1V404.9h1V405.0h1V405.3h1V405.2h1V405.3h1V405.3h1V405.3h1V404.6h1V405.1h1V404.9h1V405.3h1V404.7h1V404.4h1V404.8h1V405.0h1V404.3h1V404.8h1V404.4h1V404.6h1V403.9h1V404.7h1V404.7h1V404.0h1V403.8h1V404.4h1V401.0h1V402.6h1V405.0h1V403.5h1V404.6h1V404.0h1V404.4h1V402.3h1V403.7h1V403.8h1V404.3h1V403.0h1V402.8h1V403.8h1V403.6h1V402.1h1V401.7h1V400.2h1V403.6h1V400.4h1V400.6h1V400.6h1V401.7h1V399.9h1V402.2h1V401.8h1V399.6h1V395.7h1V390.4h1V384.4h1V384.9h1V390.1h1V391.1h1V392.9h1V390.6h1V389.7h1V392.3h1V390.8h1V383.2h1V382.9h1V389.0h1V388.2h1V375.9h1V374.6h1V389.3h1V393.2h1V396.2h1V394.9h1V396.4h1V394.9h1V398.7h1V395.4h1V395.0h1V398.5h1V399.7h1V393.6h1V395.8h1V390.7h1V395.1h1V393.6h1V386.3h1V363.7h1V373.6h1V383.0h1V372.1h1V358.4h1V370.9h1V375.7h1V379.7h1V375.7h1V373.9h1V373.5h1V380.1h1V389.1h1V388.4h1V393.7h1V392.8h1V396.8h1V390.7h1V396.3h1V393.3h1V394.2h1V385.7h1V396.7h1V394.2h1V392.4h1V386.6h1V387.6h1V380.6h1V382.4h1V375.5h1V377.9h1V382.4h1V375.4h1V382.3h1V373.1h1V368.0h1V362.9h1V356.7h1V358.6h1V348.4h1V338.2h1V350.5h1V351.5h1V341.3h1V325.6h1V345.4h1V337.2h1V340.4h1V321.0h1V323.4h1V321.2h1V313.7h1V315.8h1V332.7h1V344.3h1V409.0Z" fill="url(#bg)" shape-rendering="crispEdges"/>
<path d="M182.0,214.5L183.0,214.5L183.0,211.5L184.0,211.5L184.0,211.5L185.0,211.5L185.0,211.5L186.0,211.5L186.0,210.5L187.0,210.5L187.0,210.5L188.0,210.5L188.0,210.5L189.0,210.5L189.0,210.5L190.0,210.5L190.0,210.5L191.0,210.5L191.0,209.5L192.0,209.5L192.0,209.5L193.0,209.5L193.0,209.5L194.0,209.5L194.0,209.5L195.0,209.5L195.0,209.5L196.0,209.5L196.0,208.5L197.0,208.5L197.0,208.5L198.0,208.5L198.0,208.5L199.0,208.5L199.0,208.5L200.0,208.5L200.0,207.5L201.0,207.5L201.0,207.5L202.0,207.5L202.0,207.5L203.0,207.5L203.0,207.5L204.0,207.5L204.0,207.5L205.0,207.5L205.0,206.5L206.0,206.5L206.0,206.5L207.0,206.5L207.0,206.5L208.0,206.5L208.0,206.5L209.0,206.5L209.0,206.5L210.0,206.5L210.0,205.5L211.0,205.5L211.0,205.5L212.0,205.5L212.0,205.5L213.0,205.5L213.0,205.5L214.0,205.5L214.0,205.5L215.0,205.5L215.0,204.5L216.0,204.5L216.0,204.5L217.0,204.5L217.0,204.5L218.0,204.5L218.0,204.5L219.0,204.5L219.0,203.5L220.0,203.5L220.0,203.5L221.0,203.5L221.0,203.5L222.0,203.5L222.0,203.5L223.0,203.5L223.0,203.5L224.0,203.5L224.0,202.5L225.0,202.5L225.0,202.5L226.0,202.5L226.0,202.5L227.0,202.5L227.0,202.5L228.0,202.5L228.0,202.5L229.0,202.5L229.0,202.5L230.0,202.5L230.0,201.5L231.0,201.5L231.0,201.5L232.0,201.5L232.0,201.5L233.0,201.5L233.0,201.5L234.0,201.5L234.0,201.5L235.0,201.5L235.0,201.5L236.0,201.5L236.0,200.5L237.0,200.5L237.0,200.5L238.0,200.5L238.0,200.5L239.0,200.5L239.0,200.5L240.0,200.5L240.0,200.5L241.0,200.5L241.0,200.5L242.0,200.5L242.0,199.5L243.0,199.5L243.0,199.5L244.0,199.5L244.0,199.5L245.0,199.5L245.0,199.5L246.0,199.5L246.0,199.5L247.0,199.5L247.0,199.5L248.0,199.5L248.0,198.5L249.0,198.5L249.0,198.5L250.0,198.5L250.0,198.5L251.0,198.5L251.0,198.5L252.0,198.5L252.0,198.5L253.0,198.5L253.0,198.5L254.0,198.5L254.0,197.5L255.0,197.5L255.0,197.5L256.0,197.5L256.0,197.5L257.0,197.5L257.0,197.5L258.0,197.5L258.0,197.5L259.0,197.5L259.0,197.5L260.0,197.5L260.0,197.5L261.0,197.5L261.0,196.5L262.0,196.5L262.0,196.5L263.0,196.5L263.0,196.5L264.0,196.5L264.0,196.5L265.0,196.5L265.0,196.5L266.0,196.5L266.0,196.5L267.0,196.5L267.0,195.5L268.0,195.5L268.0,195.5L269.0,195.5L269.0,195.5L270.0,195.5L270.0,195.5L271.0,195.5L271.0,195.5L272.0,195.5L272.0,195.5L273.0,195.5L273.0,194.5L274.0,194.5L274.0,194.5L275.0,194.5L275.0,194.5L276.0,194.5L276.0,194.5L277.0,194.5L277.0,194.5L278.0,194.5L278.0,194.5L279.0,194.5L279.0,193.5L280.0,193.5L280.0,193.5L281.0,193.5L281.0,193.5L282.0,193.5L282.0,193.5L283.0,193.5L283.0,193.5L284.0,193.5L284.0,193.5L285.0,193.5L285.0,192.5L286.0,192.5L286.0,192.5L287.0,192.5L287.0,192.5L288.0,192.5L288.0,192.5L289.0,192.5L289.0,192.5L290.0,192.5L290.0,192.5L291.0,192.5L291.0,192.5L292.0,192.5L292.0,191.5L293.0,191.5L293.0,191.5L294.0,191.5L294.0,191.5L295.0,191.5L295.0,191.5L296.0,191.5L296.0,191.5L297.0,191.5L297.0,191.5L298.0,191.5L298.0,190.5L299.0,190.5L299.0,190.5L300.0,190.5L300.0,190.5L301.0,190.5L301.0,190.5L302.0,190.5L302.0,190.5L303.0,190.5L303.0,190.5L304.0,190.5L304.0,189.5L305.0,189.5L305.0,189.5L306.0,189.5L306.0,189.5L307.0,189.5L307.0,189.5L308.0,189.5L308.0,189.5L309.0,189.5L309.0,189.5L310.0,189.5L310.0,189.5L311.0,189.5L311.0,188.5L312.0,188.5L312.0,188.5L313.0,188.5L313.0,188.5L314.0,188.5L314.0,188.5L315.0,188.5L315.0,188.5L316.0,188.5L316.0,188.5L317.0,188.5L317.0,187.5L318.0,187.5L318.0,187.5L319.0,187.5L319.0,187.5L320.0,187.5L320.0,187.5L321.0,187.5L321.0,187.5L322.0,187.5L322.0,187.5L323.0,187.5L323.0,187.5L324.0,187.5L324.0,186.5L325.0,186.5L325.0,186.5L326.0,186.5L326.0,186.5L327.0,186.5L327.0,186.5L328.0,186.5L328.0,186.5L329.0,186.5L329.0,186.5L330.0,186.5L330.0,185.5L331.0,185.5L331.0,185.5L332.0,185.5L332.0,185.5L333.0,185.5L333.0,185.5L334.0,185.5L334.0,185.5L335.0,185.5L335.0,185.5L336.0,185.5L336.0,185.5L337.0,185.5L337.0,184.5L338.0,184.5L338.0,184.5L339.0,184.5L339.0,184.5L340.0,184.5L340.0,184.5L341.0,184.5L341.0,184.5L342.0,184.5L342.0,184.5L343.0,184.5L343.0,183.5L344.0,183.5L344.0,183.5L345.0,183.5L345.0,183.5L346.0,183.5L346.0,183.5L347.0,183.5L347.0,183.5L348.0,183.5L348.0,183.5L349.0,183.5L349.0,183.5L350.0,183.5L350.0,182.5L351.0,182.5L351.0,182.5L352.0,182.5L352.0,182.5L353.0,182.5L353.0,182.5L354.0,182.5L354.0,182.5L355.0,182.5L355.0,182.5L356.0,182.5L356.0,182.5L357.0,182.5L357.0,181.5L358.0,181.5L358.0,181.5L359.0,181.5L359.0,181.5L360.0,181.5L360.0,181.5L361.0,181.5L361.0,181.5L362.0,181.5L362.0,181.5L363.0,181.5L363.0,181.5L364.0,181.5L364.0,180.5L365.0,180.5L365.0,180.5L366.0,180.5L366.0,180.5L367.0,180.5L367.0,180.5L368.0,180.5L368.0,180.5L369.0,180.5L369.0,180.5L370.0,180.5L370.0,179.5L371.0,179.5L371.0,179.5L372.0,179.5L372.0,179.5L373.0,179.5L373.0,179.5L374.0,179.5L374.0,179.5L375.0,179.5L375.0,179.5L376.0,179.5L376.0,179.5L377.0,179.5L377.0,178.5L378.0,178.5L378.0,178.5L379.0,178.5L379.0,178.5L380.0,178.5L380.0,178.5L381.0,178.5L381.0,178.5L382.0,178.5L382.0,178.5L383.0,178.5L383.0,178.5L384.0,178.5L384.0,178.5L385.0,178.5L385.0,177.5L386.0,177.5L386.0,177.5L387.0,177.5L387.0,177.5L388.0,177.5L388.0,177.5L389.0,177.5L389.0,177.5L390.0,177.5L390.0,177.5L391.0,177.5L391.0,177.5L392.0,177.5L392.0,177.5L393.0,177.5L393.0,176.5L394.0,176.5L394.0,176.5L395.0,176.5L395.0,176.5L396.0,176.5L396.0,176.5L397.0,176.5L397.0,176.5L398.0,176.5L398.0,176.5L399.0,176.5L399.0,176.5L400.0,176.5L400.0,176.5L401.0,176.5L401.0,176.5L402.0,176.5L402.0,175.5L403.0,175.5L403.0,175.5L404.0,175.5L404.0,175.5L405.0,175.5L405.0,175.5L406.0,175.5L406.0,175.5L407.0,175.5L407.0,175.5L408.0,175.5L408.0,175.5L409.0,175.5L409.0,175.5L410.0,175.5L410.0,174.5L411.0,174.5L411.0,174.5L412.0,174.5L412.0,174.5L413.0,174.5L413.0,174.5L414.0,174.5L414.0,174.5L415.0,174.5L415.0,174.5L416.0,174.5L416.0,174.5L417.0,174.5L417.0,174.5L418.0,174.5L418.0,174.5L419.0,174.5L419.0,173.5L420.0,173.5L420.0,173.5L421.0,173.5L421.0,173.5L422.0,173.5L422.0,173.5L423.0,173.5L423.0,173.5L424.0,173.5L424.0,173.5L425.0,173.5L425.0,173.5L426.0,173.5L426.0,173.5L427.0,173.5L427.0,172.5L428.0,172.5L428.0,172.5L429.0,172.5L429.0,172.5L430.0,172.5L430.0,172.5L431.0,172.5L431.0,172.5L432.0,172.5L432.0,172.5L433.0,172.5L433.0,172.5L434.0,172.5L434.0,172.5L435.0,172.5L435.0,171.5L436.0,171.5L436.0,171.5L437.0,171.5L437.0,171.5L438.0,171.5L438.0,171.5L439.0,171.5L439.0,171.5L440.0,171.5L440.0,171.5L441.0,171.5L441.0,171.5L442.0,171.5L442.0,171.5L443.0,171.5L443.0,171.5L444.0,171.5L444.0,170.5L445.0,170.5L445.0,170.5L446.0,170.5L446.0,170.5L447.0,170.5L447.0,170.5L448.0,170.5L448.0,170.5L449.0,170.5L449.0,170.5L450.0,170.5L450.0,170.5L451.0,170.5L451.0,170.5L452.0,170.5L452.0,170.5L453.0,170.5L453.0,169.5L454.0,169.5L454.0,169.5L455.0,169.5L455.0,169.5L456.0,169.5L456.0,169.5L457.0,169.5L457.0,169.5L458.0,169.5L458.0,169.5L459.0,169.5L459.0,169.5L460.0,169.5L460.0,169.5L461.0,169.5L461.0,169.5L462.0,169.5L462.0,168.5L463.0,168.5L463.0,168.5L464.0,168.5L464.0,168.5L465.0,168.5L465.0,168.5L466.0,168.5L466.0,168.5L467.0,168.5L467.0,168.5L468.0,168.5L468.0,168.5L469.0,168.5L469.0,168.5L470.0,168.5L470.0,168.5L471.0,168.5L471.0,167.5L472.0,167.5L472.0,167.5L473.0,167.5L473.0,167.5L474.0,167.5L474.0,167.5L475.0,167.5L475.0,167.5L476.0,167.5L476.0,167.5L477.0,167.5L477.0,167.5L478.0,167.5L478.0,167.5L479.0,167.5L479.0,167.5L480.0,167.5L480.0,167.5L481.0,167.5L481.0,166.5L482.0,166.5L482.0,166.5L483.0,166.5L483.0,166.5L484.0,166.5L484.0,166.5L485.0,166.5L485.0,166.5L486.0,166.5L486.0,166.5L487.0,166.5L487.0,166.5L488.0,166.5L488.0,166.5L489.0,166.5L489.0,166.5L490.0,166.5L490.0,165.5L491.0,165.5L491.0,165.5L492.0,165.5L492.0,165.5L493.0,165.5L493.0,165.5L494.0,165.5L494.0,165.5L495.0,165.5L495.0,165.5L496.0,165.5L496.0,165.5L497.0,165.5L497.0,165.5L498.0,165.5L498.0,165.5L499.0,165.5L499.0,164.5L500.0,164.5L500.0,164.5L501.0,164.5L501.0,164.5L502.0,164.5L502.0,164.5L503.0,164.5L503.0,164.5L504.0,164.5L504.0,164.5L505.0,164.5L505.0,164.5L506.0,164.5L506.0,164.5L507.0,164.5L507.0,164.5L508.0,164.5L508.0,163.5L509.0,163.5L509.0,163.5L510.0,163.5L510.0,163.5L511.0,163.5L511.0,163.5L512.0,163.5L512.0,163.5L513.0,163.5L513.0,163.5L514.0,163.5L514.0,163.5L515.0,163.5L515.0,163.5L516.0,163.5L516.0,163.5L517.0,163.5L517.0,162.5L518.0,162.5L518.0,162.5L519.0,162.5L519.0,162.5L520.0,162.5L520.0,162.5L521.0,162.5L521.0,162.5L522.0,162.5L522.0,162.5L523.0,162.5L523.0,162.5L524.0,162.5L524.0,162.5L525.0,162.5L525.0,162.5L526.0,162.5L526.0,161.5L527.0,161.5L527.0,161.5L528.0,161.5L528.0,161.5L529.0,161.5L529.0,161.5L530.0,161.5L530.0,161.5L531.0,161.5L531.0,161.5L532.0,161.5L532.0,161.5L533.0,161.5L533.0,161.5L534.0,161.5L534.0,161.5L535.0,161.5L535.0,161.5L536.0,161.5L536.0,160.5L537.0,160.5L537.0,160.5L538.0,160.5L538.0,160.5L539.0,160.5L539.0,160.5L540.0,160.5L540.0,160.5L541.0,160.5L541.0,160.5L542.0,160.5L542.0,160.5L543.0,160.5L543.0,160.5L544.0,160.5L544.0,160.5L545.0,160.5L545.0,160.5L546.0,160.5L546.0,159.5L547.0,159.5L547.0,159.5L548.0,159.5L548.0,159.5L549.0,159.5L549.0,159.5L550.0,159.5L550.0,159.5L551.0,159.5L551.0,159.5L552.0,159.5L552.0,159.5L553.0,159.5L553.0,159.5L554.0,159.5L554.0,159.5L555.0,159.5L555.0,159.5L556.0,159.5L556.0,158.5L557.0,158.5L557.0,158.5L558.0,158.5L558.0,158.5L559.0,158.5L559.0,158.5L560.0,158.5L560.0,158.5L561.0,158.5L561.0,158.5L562.0,158.5L562.0,158.5L563.0,158.5L563.0,158.5L564.0,158.5L564.0,158.5L565.0,158.5L565.0,158.5L565.2,158.5" stroke="#10fbff" stroke-width="1.25" fill="none" stroke-linejoin="round"/><path d="M373.5,179.5v6M399.0,176.3v7M411.0,174.9v5M427.0,173.0v6M435.5,171.9v6M473.8,167.7v7M476.4,167.4v11M479.0,167.1v12M488.8,166.0v6M511.0,163.6v14M545.0,160.0v12M555.4,159.0v9M560.5,158.5v9" stroke="#10fbff" stroke-width="1.4" fill="none"/>
<path d="M565.3,127v3.4M565.3,283.5V345" stroke="#8a108a" stroke-width="1.2"/>
<path d="M181.95,253.1V126.9H615.3V253.1M181.95,409.6V283.3H615.3V409.6" stroke="#000" stroke-width="1.5" fill="none"/>
<path d="M177.5,240.2H181M177.5,227.7H181M177.5,215.1H181M177.5,202.5H181M177.5,189.9H181M177.5,177.4H181M177.5,164.8H181M177.5,152.2H181M177.5,139.7H181M177.5,127.1H181M615.5,237.1H619M615.5,221.4H619M615.5,205.7H619M615.5,189.9H619M615.5,174.2H619M615.5,158.5H619M615.5,142.8H619M615.5,127.1H619M177.5,393.6H181M177.5,377.9H181M177.5,362.1H181M177.5,346.4H181M177.5,330.7H181M177.5,314.9H181M177.5,299.2H181M177.5,283.5H181M181.8,252.8v1.6M181.8,409.3v1.6M225.1,252.8v1.6M225.1,409.3v1.6M268.4,252.8v1.6M268.4,409.3v1.6M311.8,252.8v1.6M311.8,409.3v1.6M355.1,252.8v1.6M355.1,409.3v1.6M398.4,252.8v1.6M398.4,409.3v1.6M441.7,252.8v1.6M441.7,409.3v1.6M485.0,252.8v1.6M485.0,409.3v1.6M528.4,252.8v1.6M528.4,409.3v1.6M571.7,252.8v1.6M571.7,409.3v1.6M615.0,252.8v1.6M615.0,409.3v1.6" stroke="#000" stroke-width="1.3" fill="none"/>
<g font-family="Liberation Sans, Arial, sans-serif" font-size="10.67" fill="#000" stroke="#000" stroke-width=".14">
<text x="177.6" y="244.0" text-anchor="end" textLength="23.2" lengthAdjust="spacingAndGlyphs">1000</text>
<text x="177.6" y="231.5" text-anchor="end" textLength="23.2" lengthAdjust="spacingAndGlyphs">2000</text>
<text x="177.6" y="218.9" text-anchor="end" textLength="23.2" lengthAdjust="spacingAndGlyphs">3000</text>
<text x="177.6" y="206.3" text-anchor="end" textLength="23.2" lengthAdjust="spacingAndGlyphs">4000</text>
<text x="177.6" y="193.8" text-anchor="end" textLength="23.2" lengthAdjust="spacingAndGlyphs">5000</text>
<text x="177.6" y="181.2" text-anchor="end" textLength="23.2" lengthAdjust="spacingAndGlyphs">6000</text>
<text x="177.6" y="168.6" text-anchor="end" textLength="23.2" lengthAdjust="spacingAndGlyphs">7000</text>
<text x="177.6" y="156.0" text-anchor="end" textLength="23.2" lengthAdjust="spacingAndGlyphs">8000</text>
<text x="177.6" y="143.5" text-anchor="end" textLength="23.2" lengthAdjust="spacingAndGlyphs">9000</text>
<text x="177.6" y="130.9" text-anchor="end" textLength="27.8" lengthAdjust="spacingAndGlyphs">10000</text>
<text x="618.6" y="240.9" text-anchor="start" textLength="14.5" lengthAdjust="spacingAndGlyphs">1 X</text>
<text x="618.6" y="225.2" text-anchor="start" textLength="14.5" lengthAdjust="spacingAndGlyphs">2 X</text>
<text x="618.6" y="209.5" text-anchor="start" textLength="14.5" lengthAdjust="spacingAndGlyphs">3 X</text>
<text x="618.6" y="193.8" text-anchor="start" textLength="14.5" lengthAdjust="spacingAndGlyphs">4 X</text>
<text x="618.6" y="178.0" text-anchor="start" textLength="14.5" lengthAdjust="spacingAndGlyphs">5 X</text>
<text x="618.6" y="162.3" text-anchor="start" textLength="14.5" lengthAdjust="spacingAndGlyphs">6 X</text>
<text x="618.6" y="146.6" text-anchor="start" textLength="14.5" lengthAdjust="spacingAndGlyphs">7 X</text>
<text x="618.6" y="130.9" text-anchor="start" textLength="14.5" lengthAdjust="spacingAndGlyphs">8 X</text>
<text x="177.6" y="397.4" text-anchor="end" textLength="11.2" lengthAdjust="spacingAndGlyphs">50</text>
<text x="177.6" y="381.7" text-anchor="end" textLength="17" lengthAdjust="spacingAndGlyphs">100</text>
<text x="177.6" y="365.9" text-anchor="end" textLength="17" lengthAdjust="spacingAndGlyphs">150</text>
<text x="177.6" y="350.2" text-anchor="end" textLength="17" lengthAdjust="spacingAndGlyphs">200</text>
<text x="177.6" y="334.5" text-anchor="end" textLength="17" lengthAdjust="spacingAndGlyphs">250</text>
<text x="177.6" y="318.8" text-anchor="end" textLength="17" lengthAdjust="spacingAndGlyphs">300</text>
<text x="177.6" y="303.0" text-anchor="end" textLength="17" lengthAdjust="spacingAndGlyphs">350</text>
<text x="177.6" y="287.3" text-anchor="end" textLength="17" lengthAdjust="spacingAndGlyphs">400</text>
<text x="619.0" y="387.9" text-anchor="start" textLength="14.0" lengthAdjust="spacingAndGlyphs">2%</text>
<text x="619.0" y="362.8" text-anchor="start" textLength="14.0" lengthAdjust="spacingAndGlyphs">4%</text>
<text x="619.0" y="337.6" text-anchor="start" textLength="14.0" lengthAdjust="spacingAndGlyphs">6%</text>
<text x="619.0" y="312.5" text-anchor="start" textLength="14.0" lengthAdjust="spacingAndGlyphs">8%</text>
<text x="619.0" y="287.3" text-anchor="start" textLength="19.7" lengthAdjust="spacingAndGlyphs">10%</text>
<text x="181.8" y="263.0" text-anchor="middle" textLength="13.9" lengthAdjust="spacingAndGlyphs">0.0</text>
<text x="224.9" y="263.0" text-anchor="middle" textLength="13.9" lengthAdjust="spacingAndGlyphs">2.5</text>
<text x="267.9" y="263.0" text-anchor="middle" textLength="13.9" lengthAdjust="spacingAndGlyphs">5.0</text>
<text x="311.0" y="263.0" text-anchor="middle" textLength="13.9" lengthAdjust="spacingAndGlyphs">7.5</text>
<text x="354.1" y="263.0" text-anchor="middle" textLength="19.6" lengthAdjust="spacingAndGlyphs">10.0</text>
<text x="397.1" y="263.0" text-anchor="middle" textLength="19.6" lengthAdjust="spacingAndGlyphs">12.5</text>
<text x="440.2" y="263.0" text-anchor="middle" textLength="19.6" lengthAdjust="spacingAndGlyphs">15.0</text>
<text x="483.3" y="263.0" text-anchor="middle" textLength="19.6" lengthAdjust="spacingAndGlyphs">17.5</text>
<text x="526.4" y="263.0" text-anchor="middle" textLength="19.6" lengthAdjust="spacingAndGlyphs">20.0</text>
<text x="569.4" y="263.0" text-anchor="middle" textLength="19.6" lengthAdjust="spacingAndGlyphs">22.5</text>
<text x="594.0" y="263.0" text-anchor="start" textLength="38.7" lengthAdjust="spacingAndGlyphs">25.0 GB</text>
<text x="181.8" y="419.5" text-anchor="middle" textLength="13.9" lengthAdjust="spacingAndGlyphs">0.0</text>
<text x="224.9" y="419.5" text-anchor="middle" textLength="13.9" lengthAdjust="spacingAndGlyphs">2.5</text>
<text x="267.9" y="419.5" text-anchor="middle" textLength="13.9" lengthAdjust="spacingAndGlyphs">5.0</text>
<text x="311.0" y="419.5" text-anchor="middle" textLength="13.9" lengthAdjust="spacingAndGlyphs">7.5</text>
<text x="354.1" y="419.5" text-anchor="middle" textLength="19.6" lengthAdjust="spacingAndGlyphs">10.0</text>
<text x="397.1" y="419.5" text-anchor="middle" textLength="19.6" lengthAdjust="spacingAndGlyphs">12.5</text>
<text x="440.2" y="419.5" text-anchor="middle" textLength="19.6" lengthAdjust="spacingAndGlyphs">15.0</text>
<text x="483.3" y="419.5" text-anchor="middle" textLength="19.6" lengthAdjust="spacingAndGlyphs">17.5</text>
<text x="526.4" y="419.5" text-anchor="middle" textLength="19.6" lengthAdjust="spacingAndGlyphs">20.0</text>
<text x="569.4" y="419.5" text-anchor="middle" textLength="19.6" lengthAdjust="spacingAndGlyphs">22.5</text>
<text x="594.0" y="419.5" text-anchor="start" textLength="38.7" lengthAdjust="spacingAndGlyphs">25.0 GB</text>
<text x="192.4" y="124.0" text-anchor="start" textLength="19.2" lengthAdjust="spacingAndGlyphs">LDC</text><text x="224.6" y="124.0" text-anchor="start" textLength="56.4" lengthAdjust="spacingAndGlyphs">Read speed</text><text x="294.3" y="124.0" text-anchor="start" textLength="57.1" lengthAdjust="spacingAndGlyphs">Write speed</text>
<text x="192.4" y="280.0" text-anchor="start" textLength="16.5" lengthAdjust="spacingAndGlyphs">BIS</text><text x="220.0" y="280.0" text-anchor="start" textLength="23.2" lengthAdjust="spacingAndGlyphs">Jitter</text>
</g>
<rect x="183" y="116" width="6.2" height="8" fill="#007a00"/><rect x="215" y="116" width="6.2" height="8" fill="#00ffff"/><rect x="285" y="116" width="6.2" height="8" fill="#808080"/>
<rect x="183" y="272" width="6.2" height="8" fill="#007a00"/><rect x="211.2" y="272" width="6.2" height="8" fill="#8080ff"/><rect x="245" y="268.5" width="7" height="2.5" fill="#000"/>
</svg>
<div id="chk"></div>
<div class="combo" style="left:567px;top:430px;width:75px;height:21px"></div>
<div class="arrow" style="left:630px;top:439.500px"></div>
<div class="tbtn" style="left:568px;top:467px;width:73px;height:21px"></div>
<!-- status -->
<div id="status"><div class="sep" style="left:140px"></div><div class="sep" style="left:449px"></div><div class="sep" style="left:506px"></div></div>
<div id="prog"></div>
<svg id="grip" viewBox="0 0 12 12"><g fill="#b8b8c4"><rect x="8" y="8" width="2" height="2"/><rect x="8" y="4" width="2" height="2"/><rect x="4" y="8" width="2" height="2"/><rect x="8" y="0" width="2" height="2"/><rect x="4" y="4" width="2" height="2"/><rect x="0" y="8" width="2" height="2"/></g></svg>
<span class="t" id="t0" style="left:29px;top:8.33px;font-size:12px;line-height:15.0px;color:#000;transform:scaleX(1.0118);">Opti Drive Control 1.50</span>
<span class="t" id="t1" style="left:15px;top:33.01px;font-size:11.5px;line-height:14.375px;color:#000;transform:scaleX(0.9713);">File</span>
<span class="t" id="t2" style="left:47px;top:33.01px;font-size:11.5px;line-height:14.375px;color:#000;transform:scaleX(0.9993);">Start test</span>
<span class="t" id="t3" style="left:107px;top:33.01px;font-size:11.5px;line-height:14.375px;color:#000;transform:scaleX(0.9313);">Extra</span>
<span class="t" id="t4" style="left:146px;top:33.01px;font-size:11.5px;line-height:14.375px;color:#000;transform:scaleX(1.0568);">Help</span>
<span class="t" id="t5" style="left:16px;top:64.81px;font-size:11.5px;line-height:14.375px;color:#000;font-weight:700;transform:scaleX(0.9277);">Drive</span>
<span class="t" id="t6" style="left:91px;top:65.01px;font-size:11.5px;line-height:14.375px;color:#000;transform:scaleX(0.9085);">(Q:)</span>
<span class="t" id="t7" style="left:118px;top:65.01px;font-size:11.5px;line-height:14.375px;color:#000;transform:scaleX(0.8925);">ATAPI iHES208</span>
<span class="t" id="t8" style="left:199.7px;top:65.01px;font-size:11.5px;line-height:14.375px;color:#000;transform:scaleX(0.8708);">2 8L0C</span>
<span class="t" id="t9" style="left:363.8px;top:64.81px;font-size:11.5px;line-height:14.375px;color:#000;font-weight:700;transform:scaleX(0.9126);">Speed</span>
<span class="t" id="t10" style="left:412.8px;top:64.41px;font-size:11.5px;line-height:14.375px;color:#000;transform:scaleX(0.9196);">6.0 X</span>
<span class="t" id="t11" style="left:16px;top:97.11px;font-size:11.5px;line-height:14.375px;color:#000;font-weight:700;transform:scaleX(0.8643);">Disc</span>
<span class="t" id="t12" style="left:16px;top:119.29px;font-size:11px;line-height:13.75px;color:#000;transform:scaleX(0.9430);">Type</span>
<span class="t" id="t13" style="left:16px;top:135.79px;font-size:11px;line-height:13.75px;color:#000;transform:scaleX(0.9915);">MID</span>
<span class="t" id="t14" style="left:16px;top:151.79px;font-size:11px;line-height:13.75px;color:#000;transform:scaleX(1.0548);">Length</span>
<span class="t" id="t15" style="left:16px;top:167.79px;font-size:11px;line-height:13.75px;color:#000;transform:scaleX(1.0447);">Contents</span>
<span class="t" id="t16" style="left:117.5px;top:119.29px;font-size:11px;line-height:13.75px;color:#1616e0;transform:scaleX(0.9483);">BD-R</span>
<span class="t" id="t17" style="left:67.5px;top:135.79px;font-size:11px;line-height:13.75px;color:#1616e0;transform:scaleX(0.9013);">PHILIPR02 (000)</span>
<span class="t" id="t18" style="left:98.5px;top:151.79px;font-size:11px;line-height:13.75px;color:#1616e0;transform:scaleX(0.9573);">22.12 GB</span>
<span class="t" id="t19" style="left:120.5px;top:167.79px;font-size:11px;line-height:13.75px;color:#1616e0;transform:scaleX(1.0503);">data</span>
<span class="t" id="t20" style="left:38px;top:193.33px;font-size:12px;line-height:15.0px;color:#111;transform:scaleX(0.8645);">Transfer rate</span>
<span class="t" id="t21" style="left:37.5px;top:221.33px;font-size:12px;line-height:15.0px;color:#111;transform:scaleX(0.8696);">Create test disc</span>
<span class="t" id="t22" style="left:38px;top:249.33px;font-size:12px;line-height:15.0px;color:#111;transform:scaleX(0.8659);">Verify test disc</span>
<span class="t" id="t23" style="left:38px;top:277.33px;font-size:12px;line-height:15.0px;color:#111;transform:scaleX(0.8681);">Drive info</span>
<span class="t" id="t24" style="left:38px;top:305.33px;font-size:12px;line-height:15.0px;color:#111;transform:scaleX(0.8693);">Disc info</span>
<span class="t" id="t25" style="left:38px;top:333.33px;font-size:12px;line-height:15.0px;color:#fff;transform:scaleX(0.8801);">Disc quality</span>
<span class="t" id="t26" style="left:38px;top:361.33px;font-size:12px;line-height:15.0px;color:#111;transform:scaleX(0.8568);">CD Bler</span>
<span class="t" id="t27" style="left:38px;top:389.33px;font-size:12px;line-height:15.0px;color:#111;transform:scaleX(0.9146);">FE / TE</span>
<span class="t" id="t28" style="left:38px;top:417.33px;font-size:12px;line-height:15.0px;color:#111;transform:scaleX(0.8467);">Extra tests</span>
<span class="t" id="t29" style="left:30px;top:487.29px;font-size:11px;line-height:13.75px;color:#000;transform:scaleX(1.0882);">Status window &gt;&gt;</span>
<span class="t" id="t30" style="left:11px;top:507.79px;font-size:11px;line-height:13.75px;color:#000;transform:scaleX(0.9597);">Test completed</span>
<span class="t" id="t31" style="left:183px;top:94.42px;font-size:14px;line-height:17.5px;color:#fff;font-weight:700;transform:scaleX(1.0306);">Disc quality</span>
<span class="t" id="t32" style="left:244.5px;top:429.29px;font-size:11px;line-height:13.75px;color:#000;transform:scaleX(0.8857);">LDC</span>
<span class="t" id="t33" style="left:302.5px;top:429.29px;font-size:11px;line-height:13.75px;color:#000;transform:scaleX(0.8740);">BIS</span>
<span class="t" id="t34" style="left:154.8px;top:445.79px;font-size:11px;line-height:13.75px;color:#000;transform:scaleX(0.9965);">Avg</span>
<span class="t" id="t35" style="left:155px;top:461.79px;font-size:11px;line-height:13.75px;color:#000;transform:scaleX(1.0105);">Max</span>
<span class="t" id="t36" style="left:152.8px;top:477.79px;font-size:11px;line-height:13.75px;color:#000;transform:scaleX(1.0624);">Total</span>
<span class="t" id="t37" style="left:232px;top:445.79px;font-size:11px;line-height:13.75px;color:#1616e0;transform:scaleX(0.9508);">207.34</span>
<span class="t" id="t38" style="left:297.5px;top:445.79px;font-size:11px;line-height:13.75px;color:#1616e0;transform:scaleX(0.9570);">3.48</span>
<span class="t" id="t39" style="left:240.5px;top:461.79px;font-size:11px;line-height:13.75px;color:#1616e0;transform:scaleX(0.9598);">9728</span>
<span class="t" id="t40" style="left:300.5px;top:461.79px;font-size:11px;line-height:13.75px;color:#1616e0;transform:scaleX(0.9532);">304</span>
<span class="t" id="t41" style="left:215.5px;top:477.79px;font-size:11px;line-height:13.75px;color:#1616e0;transform:scaleX(0.9907);">75141457</span>
<span class="t" id="t42" style="left:276.5px;top:477.79px;font-size:11px;line-height:13.75px;color:#1616e0;transform:scaleX(0.9690);">1259419</span>
<span class="t" id="t43" style="left:409.3px;top:430.29px;font-size:11px;line-height:13.75px;color:#000;transform:scaleX(1.0569);">Jitter</span>
<span class="t" id="t44" style="left:453.6px;top:434.29px;font-size:11px;line-height:13.75px;color:#000;transform:scaleX(0.9713);">Speed</span>
<span class="t" id="t45" style="left:453.6px;top:461.79px;font-size:11px;line-height:13.75px;color:#000;transform:scaleX(1.0450);">Position</span>
<span class="t" id="t46" style="left:453.6px;top:477.79px;font-size:11px;line-height:13.75px;color:#000;transform:scaleX(0.9557);">Samples</span>
<span class="t" id="t47" style="left:511.6px;top:434.29px;font-size:11px;line-height:13.75px;color:#1616e0;transform:scaleX(0.9682);">6.02 X</span>
<span class="t" id="t48" style="left:511.6px;top:461.79px;font-size:11px;line-height:13.75px;color:#1616e0;transform:scaleX(0.9675);">22650</span>
<span class="t" id="t49" style="left:511.6px;top:477.79px;font-size:11px;line-height:13.75px;color:#1616e0;transform:scaleX(0.9586);">361061</span>
<span class="t" id="t50" style="left:570.3px;top:434.11px;font-size:11.5px;line-height:14.375px;color:#000;transform:scaleX(0.9196);">6.0 X</span>
<span class="t" id="t51" style="left:592px;top:471.11px;font-size:11.5px;line-height:14.375px;color:#000;transform:scaleX(0.9878);">Start</span>
<span class="t" id="t52" style="left:461.4px;top:507.79px;font-size:11px;line-height:13.75px;color:#000;transform:scaleX(0.9139);">100.0%</span>
<span class="t" id="t53" style="left:608.7px;top:507.79px;font-size:11px;line-height:13.75px;color:#000;transform:scaleX(1.0025);">20:33</span>
</body>
</html>
